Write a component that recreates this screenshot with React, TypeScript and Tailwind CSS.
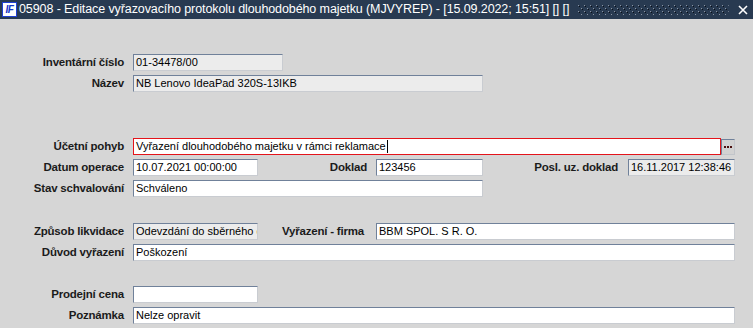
import React from 'react';

type FieldProps = {
  value?: string;
  width: string;
  gray?: boolean;
  red?: boolean;
  cursor?: boolean;
};

// Inset-looking text box used everywhere in the form
function Field({ value = '', width, gray, red, cursor }: FieldProps) {
  const border = red
    ? 'border border-[#e4141b]'
    : 'border border-t-[#70819a] border-l-[#70819a] border-r-[#c9ccd1] border-b-[#c9ccd1]';
  return (
    <div
      className={`${width} h-[17px] ${border} ${gray ? 'bg-[#ececec]' : 'bg-white'} px-[2px] text-[11px] leading-[15px] text-black whitespace-nowrap overflow-hidden flex items-center`}
    >
      <span>{value}</span>
      {cursor && <span className="w-px h-[13px] bg-black ml-px" />}
    </div>
  );
}

function Label({ children, width = 'w-[124px]' }: { children: React.ReactNode; width?: string }) {
  return (
    <div className={`${width} shrink-0 text-right font-bold text-[11.5px] tracking-[-0.2px] text-[#1b1b1b] whitespace-nowrap`}>
      {children}
    </div>
  );
}

function Row({ children }: { children: React.ReactNode }) {
  return <div className="flex items-center h-[17px]">{children}</div>;
}

export default function App() {
  return (
    <div
      className="w-[753px] h-[328px] overflow-hidden bg-[#d6d6d6] flex flex-col"
      style={{ fontFamily: '"Liberation Sans", Arial, sans-serif' }}
    >
      {/* Title bar */}
      <div className="h-[19px] bg-[#283a51] flex items-center shrink-0">
        <div className="ml-[2px] w-[15px] h-[15px] bg-white border border-[#1e3fd1] flex items-center justify-center">
          <span className="text-[#1634c8] font-bold italic text-[10px] leading-none tracking-[-0.5px]">IF</span>
        </div>
        <div className="ml-[2px] text-white text-[12.5px] whitespace-nowrap tracking-[-0.1px]">
          05908 - Editace vyřazovacího protokolu dlouhodobého majetku (MJVYREP) - [15.09.2022; 15:51] [] []
        </div>
        <div className="flex-1 mx-[9px] h-[11px]">
          <svg width="100%" height="11">
            <defs>
              <pattern id="dots" width="6" height="6" patternUnits="userSpaceOnUse">
                <rect x="0" y="1" width="1" height="1" fill="#8b95a3" />
                <rect x="1" y="2" width="1" height="1" fill="#0b0f16" />
                <rect x="3" y="4" width="1" height="1" fill="#8b95a3" />
                <rect x="4" y="5" width="1" height="1" fill="#0b0f16" />
              </pattern>
            </defs>
            <rect width="100%" height="11" fill="url(#dots)" />
          </svg>
        </div>
        <div className="mr-[5px] w-[10px] h-[10px]">
          <svg width="10" height="10" viewBox="0 0 10 10">
            <path d="M1 1 L9 9 M9 1 L1 9" stroke="#ffffff" strokeWidth="1.6" />
          </svg>
        </div>
      </div>

      <div className="flex flex-col pt-[35px]">
        {/* Identification */}
        <div className="flex flex-col gap-[4px]">
          <Row>
            <Label>Inventární číslo</Label>
            <div className="ml-[9px]">
              <Field value="01-34478/00" width="w-[150px]" gray />
            </div>
          </Row>
          <Row>
            <Label>Název</Label>
            <div className="ml-[9px]">
              <Field value="NB Lenovo IdeaPad 320S-13IKB" width="w-[350px]" gray />
            </div>
          </Row>
        </div>

        {/* Operation */}
        <div className="flex flex-col gap-[4px] mt-[46px]">
          <Row>
            <Label>Účetní pohyb</Label>
            <div className="ml-[9px] flex items-center">
              <Field value="Vyřazení dlouhodobého majetku v rámci reklamace" width="w-[588px]" red cursor />
              <div className="w-[14px] h-[16px] bg-[#d2d2d2] border border-t-[#70819a] border-l-[#70819a] border-r-[#c2c5ca] border-b-[#c2c5ca] flex items-center justify-center gap-px">
                <div className="w-[2px] h-[2px] bg-[#4a1010]" />
                <div className="w-[2px] h-[2px] bg-[#4a1010]" />
                <div className="w-[2px] h-[2px] bg-[#4a1010]" />
              </div>
            </div>
          </Row>
          <Row>
            <Label>Datum operace</Label>
            <div className="ml-[9px]">
              <Field value="10.07.2021 00:00:00" width="w-[125px]" />
            </div>
            <Label width="w-[109px]">Doklad</Label>
            <div className="ml-[9px]">
              <Field value="123456" width="w-[107px]" />
            </div>
            <Label width="w-[135px]">Posl. uz. doklad</Label>
            <div className="ml-[10px]">
              <Field value="16.11.2017 12:38:46" width="w-[107px]" gray />
            </div>
          </Row>
          <Row>
            <Label>Stav schvalování</Label>
            <div className="ml-[9px]">
              <Field value="Schváleno" width="w-[350px]" />
            </div>
          </Row>
        </div>

        {/* Disposal */}
        <div className="flex flex-col gap-[4px] mt-[26px]">
          <Row>
            <Label>Způsob likvidace</Label>
            <div className="ml-[9px]">
              <Field value="Odevzdání do sběrného dvora" width="w-[125px]" gray />
            </div>
            <Label width="w-[106px]">Vyřazení - firma</Label>
            <div className="ml-[12px]">
              <Field value="BBM SPOL. S R. O." width="w-[359px]" />
            </div>
          </Row>
          <Row>
            <Label>Důvod vyřazení</Label>
            <div className="ml-[9px]">
              <Field value="Poškození" width="w-[602px]" />
            </div>
          </Row>
        </div>

        {/* Sale */}
        <div className="flex flex-col gap-[4px] mt-[25px]">
          <Row>
            <Label>Prodejní cena</Label>
            <div className="ml-[9px]">
              <Field width="w-[125px]" />
            </div>
          </Row>
          <Row>
            <Label>Poznámka</Label>
            <div className="ml-[9px]">
              <Field value="Nelze opravit" width="w-[602px]" />
            </div>
          </Row>
        </div>
      </div>
    </div>
  );
}
